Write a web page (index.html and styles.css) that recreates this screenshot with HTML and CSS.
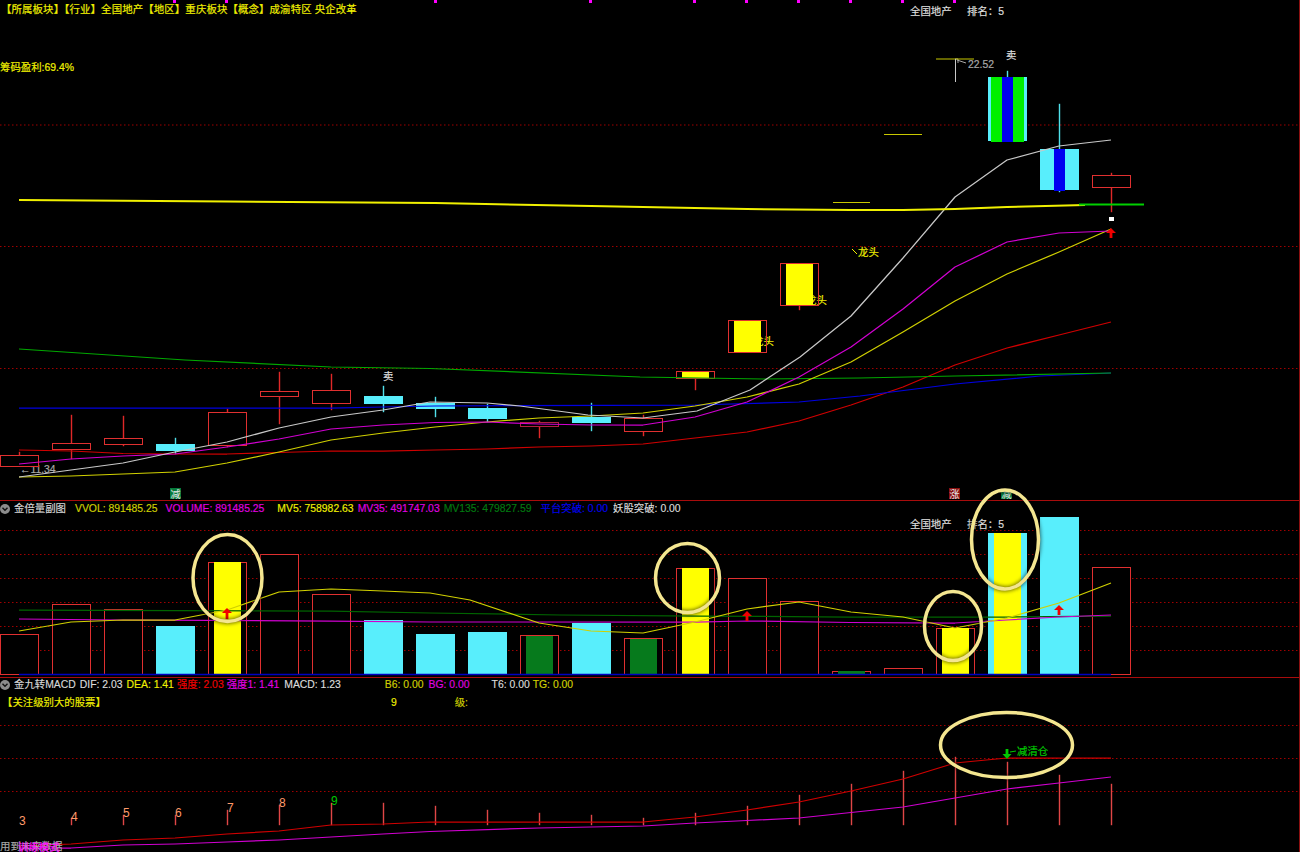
FILE: index.html
```html
<!DOCTYPE html>
<html lang="zh-CN">
<head>
<meta charset="utf-8">
<title>K线图</title>
<link rel="stylesheet" href="styles.css">
</head>
<body>
<main class="screen">

<section class="pane pane-main">
  <p class="sector-tags">【所属板块】【行业】全国地产【地区】重庆板块【概念】成渝特区 央企改革</p>
  <svg class="chart" width="1300" height="500" viewBox="0 0 1300 500">
    <g class="ticks">
      <rect x="173" y="0" width="3" height="3"/><rect x="225" y="0" width="3" height="3"/><rect x="434" y="0" width="3" height="3"/><rect x="589" y="0" width="3" height="3"/><rect x="693" y="0" width="3" height="3"/><rect x="745" y="0" width="3" height="3"/><rect x="797" y="0" width="3" height="3"/><rect x="849" y="0" width="3" height="3"/><rect x="901" y="0" width="3" height="3"/><rect x="953" y="0" width="3" height="3"/>
    </g>
    <g class="grid">
      <line x1="0" y1="125" x2="1299" y2="125"/><line x1="0" y1="246.5" x2="1299" y2="246.5"/><line x1="0" y1="368.5" x2="1299" y2="368.5"/>
    </g>

    <text class="lbl yellow" x="0" y="71">筹码盈利:69.4%</text>
    <text class="lbl pale" x="910" y="15">全国地产</text>
    <text class="lbl pale" x="967" y="15">排名：5</text>
    <text class="lbl pale" x="1006" y="59">卖</text>
    <text class="lbl pale" x="383" y="380">卖</text>
    <text class="lbl grey" x="968" y="68">22.52</text>
    <text class="lbl grey" x="20" y="473">←11.34</text>
    <text class="lbl yellow" x="753" y="345">龙头</text>
    <text class="lbl yellow" x="806" y="304">龙头</text>
    <text class="lbl yellow" x="858" y="256">龙头</text>
    <path class="pointer-y" d="M852 249l5 5"/>
    <path class="pointer-g" d="M957 60l9 3M955 59h3v4"/>

    <g class="wick-up">
      <rect x="19" y="452" width="1" height="14"/><rect x="71" y="415" width="1" height="44"/><rect x="123" y="416" width="1" height="30"/><rect x="227" y="409" width="1" height="38"/><rect x="279" y="372" width="1" height="52"/><rect x="331" y="374" width="1" height="36"/><rect x="539" y="421" width="1" height="17"/><rect x="643" y="415" width="1" height="21"/><rect x="695" y="379" width="1" height="11"/><rect x="799" y="305" width="1" height="5"/><rect x="1111" y="173" width="1" height="39"/>
    </g>
    <g class="wick-down">
      <rect x="175" y="438" width="1" height="16"/><rect x="383" y="386" width="1" height="26"/><rect x="435" y="397" width="1" height="20"/><rect x="487" y="404" width="1" height="18"/><rect x="591" y="403" width="1" height="28"/><rect x="1007" y="71" width="1" height="6"/><rect x="1059" y="104" width="1" height="88"/>
    </g>
    <g class="body-up">
      <rect x="0.5" y="455.5" width="38" height="11"/><rect x="52.5" y="443.5" width="38" height="6"/><rect x="104.5" y="438.5" width="38" height="6"/><rect x="208.5" y="412.5" width="38" height="33"/><rect x="260.5" y="391.5" width="38" height="5"/><rect x="312.5" y="390.5" width="38" height="13"/><rect x="624.5" y="418.5" width="38" height="13"/><rect x="1092.5" y="175.5" width="38" height="12"/>
    </g>
    <rect class="body-dim" x="520.5" y="422.5" width="38" height="4"/>
    <g class="body-down">
      <rect x="156" y="444" width="39" height="7"/><rect x="364" y="396" width="39" height="8"/><rect x="416" y="403" width="39" height="6"/><rect x="468" y="408" width="39" height="11"/><rect x="572" y="417" width="39" height="6"/><rect x="1040" y="149" width="39" height="41"/><rect x="988" y="77" width="39" height="64"/>
    </g>
    <rect class="fill-green" x="991" y="77" width="33" height="65"/>
    <rect class="fill-blue" x="1002" y="77" width="11" height="65"/>
    <rect class="fill-blue" x="1054" y="149" width="11" height="42"/>

    <g class="fill-yellow">
      <rect x="682" y="371" width="27" height="8"/><rect x="734" y="320" width="27" height="33"/><rect x="786" y="264" width="27" height="42"/>
    </g>
    <g class="outline-up">
      <rect x="676.5" y="371.5" width="38" height="7"/><rect x="728.5" y="320.5" width="38" height="32"/><rect x="780.5" y="263.5" width="38" height="42"/>
    </g>
    <g class="doji">
      <line x1="833" y1="202.5" x2="870" y2="202.5"/><line x1="884" y1="134.5" x2="922" y2="134.5"/><line x1="936" y1="59" x2="974" y2="59"/>
    </g>
    <rect class="doji-wick" x="955" y="59" width="1" height="23"/>

    <polyline class="ma ma-red" points="19,450 71,451 123,453.5 175,454 227,454 279,452.5 331,451 383,451 435,450 487,449 539,447 591,446 643,444 695,438 747,432 799,421 851,405 903,387 955,365 1007,348 1059,335 1111,322"/>
    <polyline class="ma ma-blue" points="19,408 331,408 383,407 435,406 695,405 799,402 860,396 955,384 1040,376 1111,373"/>
    <polyline class="ma ma-green" points="19,349 185,360 331,367 430,368.5 640,377 763,379 860,378 955,376 1111,373"/>
    <polyline class="ma ma-olive" points="19,477 71,476 123,474 175,472 227,463 279,452 331,440 383,433 435,427 487,422 539,418 591,416 643,413 695,406 747,397 799,384 851,362 903,332 955,301 1007,274 1059,252 1111,229"/>
    <polyline class="ma ma-magenta" points="19,464 71,459 123,456 175,454 227,447 279,439 331,429 383,425 435,422.5 487,422 539,424 591,425 643,425 695,417 747,402 799,377 851,347 903,309 955,267 1007,242 1059,233 1111,231"/>
    <polyline class="ma ma-white" points="19,477 71,470 123,463 175,452 227,442 279,428 331,417 383,410 430,402 487,403 520,406 588,415 643,418 697,411 750,390 800,357 851,316 903,258 955,197 1007,160 1059,146 1111,140"/>
    <polyline class="ma ma-thick" points="19,200 227,201.5 435,203 591,206 747,209 851,210 903,210 955,209 1007,207 1085,205"/>
    <line class="ma ma-lime" x1="1079" y1="204.5" x2="1144" y2="204.5"/>

    <rect class="dot" x="1109" y="217" width="5" height="4"/>
    <path class="arrow-red" d="M1111 228l5 5h-3.6v5h-2.8v-5h-3.6z"/>

    <rect class="badge-green" x="170" y="488" width="11" height="11"/>
    <text class="badge-text" x="175.5" y="498">减</text>
    <rect class="badge-red" x="949" y="488" width="11" height="11"/>
    <text class="badge-text" x="954.5" y="498">涨</text>
    <rect class="badge-green" x="1001" y="492" width="11" height="7"/>
    <text class="badge-text" x="1006.5" y="498">减</text>
  </svg>
</section>

<section class="pane pane-vol">
  <svg class="chart" width="1300" height="176" viewBox="0 501 1300 176">
    <g class="grid">
      <line x1="0" y1="530.5" x2="1299" y2="530.5"/><line x1="0" y1="554.5" x2="1299" y2="554.5"/><line x1="0" y1="578.5" x2="1299" y2="578.5"/><line x1="0" y1="602.5" x2="1299" y2="602.5"/><line x1="0" y1="626.5" x2="1299" y2="626.5"/><line x1="0" y1="650.5" x2="1299" y2="650.5"/>
    </g>
    <text class="lbl pale" x="910" y="528">全国地产</text>
    <text class="lbl pale" x="967" y="528">排名：5</text>

    <g class="body-up">
      <rect x="0.5" y="634.5" width="38" height="40"/><rect x="52.5" y="604.5" width="38" height="70"/><rect x="104.5" y="609.5" width="38" height="65"/><rect x="208.5" y="562.5" width="38" height="112"/><rect x="260.5" y="554.5" width="38" height="120"/><rect x="312.5" y="594.5" width="38" height="80"/><rect x="520.5" y="635.5" width="38" height="39"/><rect x="624.5" y="638.5" width="38" height="36"/><rect x="676.5" y="568.5" width="38" height="106"/><rect x="728.5" y="578.5" width="38" height="96"/><rect x="780.5" y="601.5" width="38" height="73"/><rect x="832.5" y="671.5" width="38" height="3"/><rect x="884.5" y="668.5" width="38" height="6"/><rect x="936.5" y="628.5" width="38" height="46"/><rect x="1092.5" y="567.5" width="38" height="107"/>
    </g>
    <g class="body-down">
      <rect x="156" y="626" width="39" height="48"/><rect x="364" y="620" width="39" height="54"/><rect x="416" y="634" width="39" height="40"/><rect x="468" y="632" width="39" height="42"/><rect x="572" y="623" width="39" height="51"/><rect x="988" y="533" width="39" height="141"/><rect x="1040" y="517" width="39" height="157"/>
    </g>
    <g class="fill-yellow">
      <rect x="214" y="562" width="27" height="112"/><rect x="682" y="568" width="27" height="106"/><rect x="942" y="628" width="27" height="46"/><rect x="994" y="533" width="27" height="141"/>
    </g>
    <g class="fill-dark-green">
      <rect x="526" y="636" width="27" height="38"/><rect x="630" y="639" width="27" height="35"/><rect x="838" y="671" width="27" height="3"/>
    </g>

    <polyline class="ma ma-dark-green" points="19,610 331,611 430,613 560,615 700,616 850,617 1007,617 1111,616"/>
    <polyline class="ma ma-magenta" points="19,619 120,620 330,621 430,622 695,622 747,621 850,622.5 955,623 1007,620 1059,617 1111,615"/>
    <polyline class="ma ma-olive" points="19,631 71,622 123,620 175,620 227,610 279,592 331,589 383,591 430,593 470,600 539,623 591,631 643,633 695,622 747,609 799,602 851,612 903,617 955,628 1007,618 1059,603 1111,583"/>
    <line class="baseline" x1="19" y1="674.5" x2="1111" y2="674.5"/>

    <path class="arrow-red" d="M227 608l5 5h-3.6v6h-2.8v-6h-3.6z"/>
    <path class="arrow-red" d="M747 611l5 5h-3.6v5h-2.8v-5h-3.6z"/>
    <path class="arrow-red" d="M1059 605l5 5h-3.6v5h-2.8v-5h-3.6z"/>
  </svg>
  <div class="legend">
    <svg class="collapse" width="10" height="10" viewBox="0 0 10 10"><circle cx="5" cy="5" r="5"/><path d="M2.5 3.8L5 6.3l2.5-2.5"/></svg>
    <span class="legend-title">金倍量副图</span>
    <span class="olive gap-9">VVOL: 891485.25</span>
    <span class="magenta gap-8">VOLUME: 891485.25</span>
    <span class="yellow gap-13">MV5: 758982.63</span>
    <span class="magenta gap-4">MV35: 491747.03</span>
    <span class="dark-green gap-4">MV135: 479827.59</span>
    <span class="blue gap-9">平台突破: 0.00</span>
    <span class="pale gap-5">妖股突破: 0.00</span>
  </div>
</section>

<section class="pane pane-macd">
  <svg class="chart" width="1300" height="174" viewBox="0 678 1300 174">
    <g class="grid">
      <line x1="0" y1="725.5" x2="1299" y2="725.5"/><line x1="0" y1="758.5" x2="1299" y2="758.5"/><line x1="0" y1="791.5" x2="1299" y2="791.5"/>
    </g>
    <g class="macd-bars">
      <rect x="71" y="818" width="1" height="7"/><rect x="123" y="815" width="1" height="10"/><rect x="175" y="815" width="1" height="10"/><rect x="227" y="810" width="1" height="15"/><rect x="279" y="805" width="1" height="20"/><rect x="331" y="803" width="1" height="22"/><rect x="383" y="803" width="1" height="22"/><rect x="435" y="806" width="1" height="19"/><rect x="487" y="810" width="1" height="15"/><rect x="539" y="813" width="1" height="12"/><rect x="591" y="815" width="1" height="10"/><rect x="643" y="818" width="1" height="7"/><rect x="695" y="813" width="1" height="12"/><rect x="747" y="806" width="1" height="19"/><rect x="799" y="795" width="1" height="30"/><rect x="851" y="784" width="1" height="41"/><rect x="903" y="771" width="1" height="54"/><rect x="955" y="757" width="1" height="68"/><rect x="1007" y="762" width="1" height="63"/><rect x="1059" y="775" width="1" height="50"/><rect x="1111" y="784" width="1" height="41"/>
    </g>
    <polyline class="ma ma-magenta" points="19,848 71,848 123,845 175,844 227,842 279,840 331,837 383,834 430,831.5 539,828 643,826 695,823 747,820.5 799,818 851,812.5 903,807 955,798 1007,789 1059,783 1111,777"/>
    <polyline class="ma ma-red" points="19,846 71,844 123,840 175,838 227,834 279,831 331,825 383,824 430,822 643,822 695,817 747,810 799,802 851,791 903,779 955,763 1007,758 1111,758"/>

    <text class="seq salmon" x="19" y="825">3</text>
    <text class="seq salmon" x="71" y="821">4</text>
    <text class="seq salmon" x="123" y="817">5</text>
    <text class="seq salmon" x="175" y="817">6</text>
    <text class="seq salmon" x="227" y="812">7</text>
    <text class="seq salmon" x="279" y="807">8</text>
    <text class="seq lime" x="331" y="805">9</text>

    <text class="lbl lime" x="1017" y="755">减清仓</text>
    <path class="pointer-lime" d="M1010 752l6-1"/>
    <path class="arrow-green" d="M1007 759l-4.5-5h3.100v-5h2.800v5h3.100z"/>

    <text class="lbl grey" x="0" y="850">用到未来数据</text>
    <text class="lbl bright-magenta" x="18" y="851">训练模式</text>
  </svg>
  <div class="legend">
    <svg class="collapse" width="10" height="10" viewBox="0 0 10 10"><circle cx="5" cy="5" r="5"/><path d="M2.5 3.8L5 6.3l2.500-2.500"/></svg>
    <span class="legend-title">金九转MACD</span>
    <span class="pale gap-4">DIF: 2.03</span>
    <span class="yellow gap-4">DEA: 1.41</span>
    <span class="red gap-3">强度: 2.03</span>
    <span class="magenta gap-3">强度1: 1.41</span>
    <span class="pale gap-5">MACD: 1.23</span>
    <span class="olive gap-44">B6: 0.00</span>
    <span class="magenta gap-5">BG: 0.00</span>
    <span class="pale gap-22">T6: 0.00</span>
    <span class="olive gap-3">TG: 0.00</span>
  </div>
  <div class="legend legend-second">
    <span class="yellow focus-title">【关注级别大的股票】</span>
    <span class="yellow focus-nine">9</span>
    <span class="olive focus-level">级:</span>
  </div>
</section>

<svg class="ovals" width="1300" height="852" viewBox="0 0 1300 852">
  <ellipse cx="227.500" cy="578" rx="34.500" ry="43.500"/>
  <ellipse cx="687.500" cy="578" rx="32" ry="34.500"/>
  <ellipse cx="1005" cy="539.500" rx="33.500" ry="49.500"/>
  <ellipse cx="953" cy="626" rx="28.500" ry="34.500"/>
  <ellipse cx="1006.500" cy="745" rx="66" ry="32.500"/>
</svg>
</main>
</body>
</html>
```

FILE: styles.css
```css
html, body {
  margin: 0;
  padding: 0;
  background: #000;
}

.screen {
  position: relative;
  width: 1300px;
  height: 852px;
  overflow: hidden;
  background: #000;
  font-family: "Liberation Sans", "Noto Sans CJK SC", sans-serif;
  font-size: 10.4px;
  line-height: 14px;
}

.screen::after {
  content: "";
  position: absolute;
  top: 0;
  right: 0;
  bottom: 0;
  width: 1px;
  background: #8a1010;
}

.pane {
  position: relative;
}

.pane-main {
  height: 500px;
  border-bottom: 1px solid #a80c0c;
}

.pane-vol {
  height: 176px;
  border-bottom: 1px solid #a80c0c;
}

.pane-macd {
  height: 174px;
}

.chart {
  display: block;
}

.sector-tags {
  position: absolute;
  top: 3px;
  left: 1px;
  margin: 0;
  color: #f0f000;
  letter-spacing: 0.14px;
  white-space: nowrap;
  -webkit-text-stroke: 0.2px currentColor;
}

/* Legend rows laid over each chart pane */
.legend {
  position: absolute;
  top: 1px;
  left: 0;
  display: flex;
  align-items: center;
  height: 14px;
  white-space: nowrap;
  -webkit-text-stroke: 0.15px currentColor;
}

.pane-macd .legend {
  top: 0;
}

.pane-macd .legend-second {
  top: 18px;
}

.collapse {
  flex: none;
}

.collapse circle {
  fill: #8c8c8c;
}

.collapse path {
  fill: none;
  stroke: #111;
  stroke-width: 1.4;
}

.legend-title {
  margin-left: 4px;
  color: #d8d8d8;
}

.gap-3 { margin-left: 3px; }
.gap-4 { margin-left: 4px; }
.gap-5 { margin-left: 5px; }
.gap-8 { margin-left: 8px; }
.gap-9 { margin-left: 9px; }
.gap-13 { margin-left: 13px; }
.gap-22 { margin-left: 22px; }
.gap-44 { margin-left: 44px; }

.focus-title { margin-left: 2px; }
.focus-nine { margin-left: 285px; }
.focus-level { margin-left: 58px; }

/* Text colours */
.yellow { color: #f0f000; fill: #f0f000; }
.olive { color: #d0d000; fill: #d0d000; }
.magenta { color: #e000e0; fill: #e000e0; }
.bright-magenta { color: #ff10ff; fill: #ff10ff; }
.dark-green { color: #007a10; }
.blue { color: #0000f0; }
.red { color: #f00000; }
.pale { color: #dcdcdc; fill: #dcdcdc; }
.grey { color: #a8a8a8; fill: #a8a8a8; }
.salmon { color: #ff9a6a; fill: #ff9a6a; }
.lime { color: #00c800; fill: #00c800; }

.lbl {
  font-size: 10.4px;
  font-family: "Liberation Sans", "Noto Sans CJK SC", sans-serif;
  stroke: currentColor;
  stroke-width: 0.2px;
}

.seq {
  font-size: 12px;
  font-family: "Liberation Sans", sans-serif;
}

/* Chart shapes */
.ticks rect { fill: #ff00ff; }

.grid line {
  stroke: #a00000;
  stroke-width: 1;
  stroke-dasharray: 1.500 2.500;
}

.wick-up rect { fill: #e02828; stroke: #e02828; stroke-width: 0.4; }
.wick-down rect { fill: #50e0ea; stroke: #50e0ea; stroke-width: 0.4; }

.body-up rect,
.outline-up rect {
  stroke: #e03030;
  stroke-width: 1;
}

.body-up rect { fill: #000; }
.outline-up rect { fill: none; }

.body-dim {
  fill: #000;
  stroke: #b02040;
  stroke-width: 1;
}

.body-down rect { fill: #58eefc; }
.fill-green { fill: #00f000; }
.fill-blue { fill: #0000f0; }
.fill-yellow rect { fill: #ffff00; }
.fill-dark-green rect { fill: #067a1c; }

.doji line { stroke: #c8c800; stroke-width: 1; }
.doji-wick { fill: #c8c8c8; }

.ma { fill: none; stroke-width: 1.250; stroke-linejoin: round; }
.ma-red { stroke: #d00000; }
.ma-blue { stroke: #0000e0; }
.ma-green { stroke: #00a800; }
.ma-dark-green { stroke: #006400; }
.ma-olive { stroke: #d0d000; }
.ma-magenta { stroke: #d000d0; }
.ma-white { stroke: #c8c8c8; }
.ma-thick { stroke: #f0f000; stroke-width: 2; }
.ma-lime { stroke: #00d000; stroke-width: 2; }

.baseline { stroke: #0000c0; stroke-width: 1.500; }

.dot { fill: #fff; }
.arrow-red { fill: #f00000; }
.arrow-green { fill: #00c800; }

.pointer-y { stroke: #f0f000; stroke-width: 1; fill: none; }
.pointer-g { stroke: #a8a8a8; stroke-width: 1; fill: none; }
.pointer-lime { stroke: #00c800; stroke-width: 1; fill: none; }

.badge-green { fill: #067a3a; }
.badge-red { fill: #8a1010; }

.badge-text {
  font-size: 10px;
  fill: #e8e8e8;
  text-anchor: middle;
  font-family: "Noto Sans CJK SC", sans-serif;
}

.macd-bars rect { fill: #e04848; stroke: #e04848; stroke-width: 0.4; }

/* Hand-drawn highlight ovals over the chart */
.ovals {
  position: absolute;
  top: 0;
  left: 0;
  pointer-events: none;
}

.ovals ellipse {
  fill: none;
  stroke: #f4e690;
  stroke-width: 3.500;
  filter: drop-shadow(0 0 2px rgba(0, 0, 0, 0.8));
}
```
